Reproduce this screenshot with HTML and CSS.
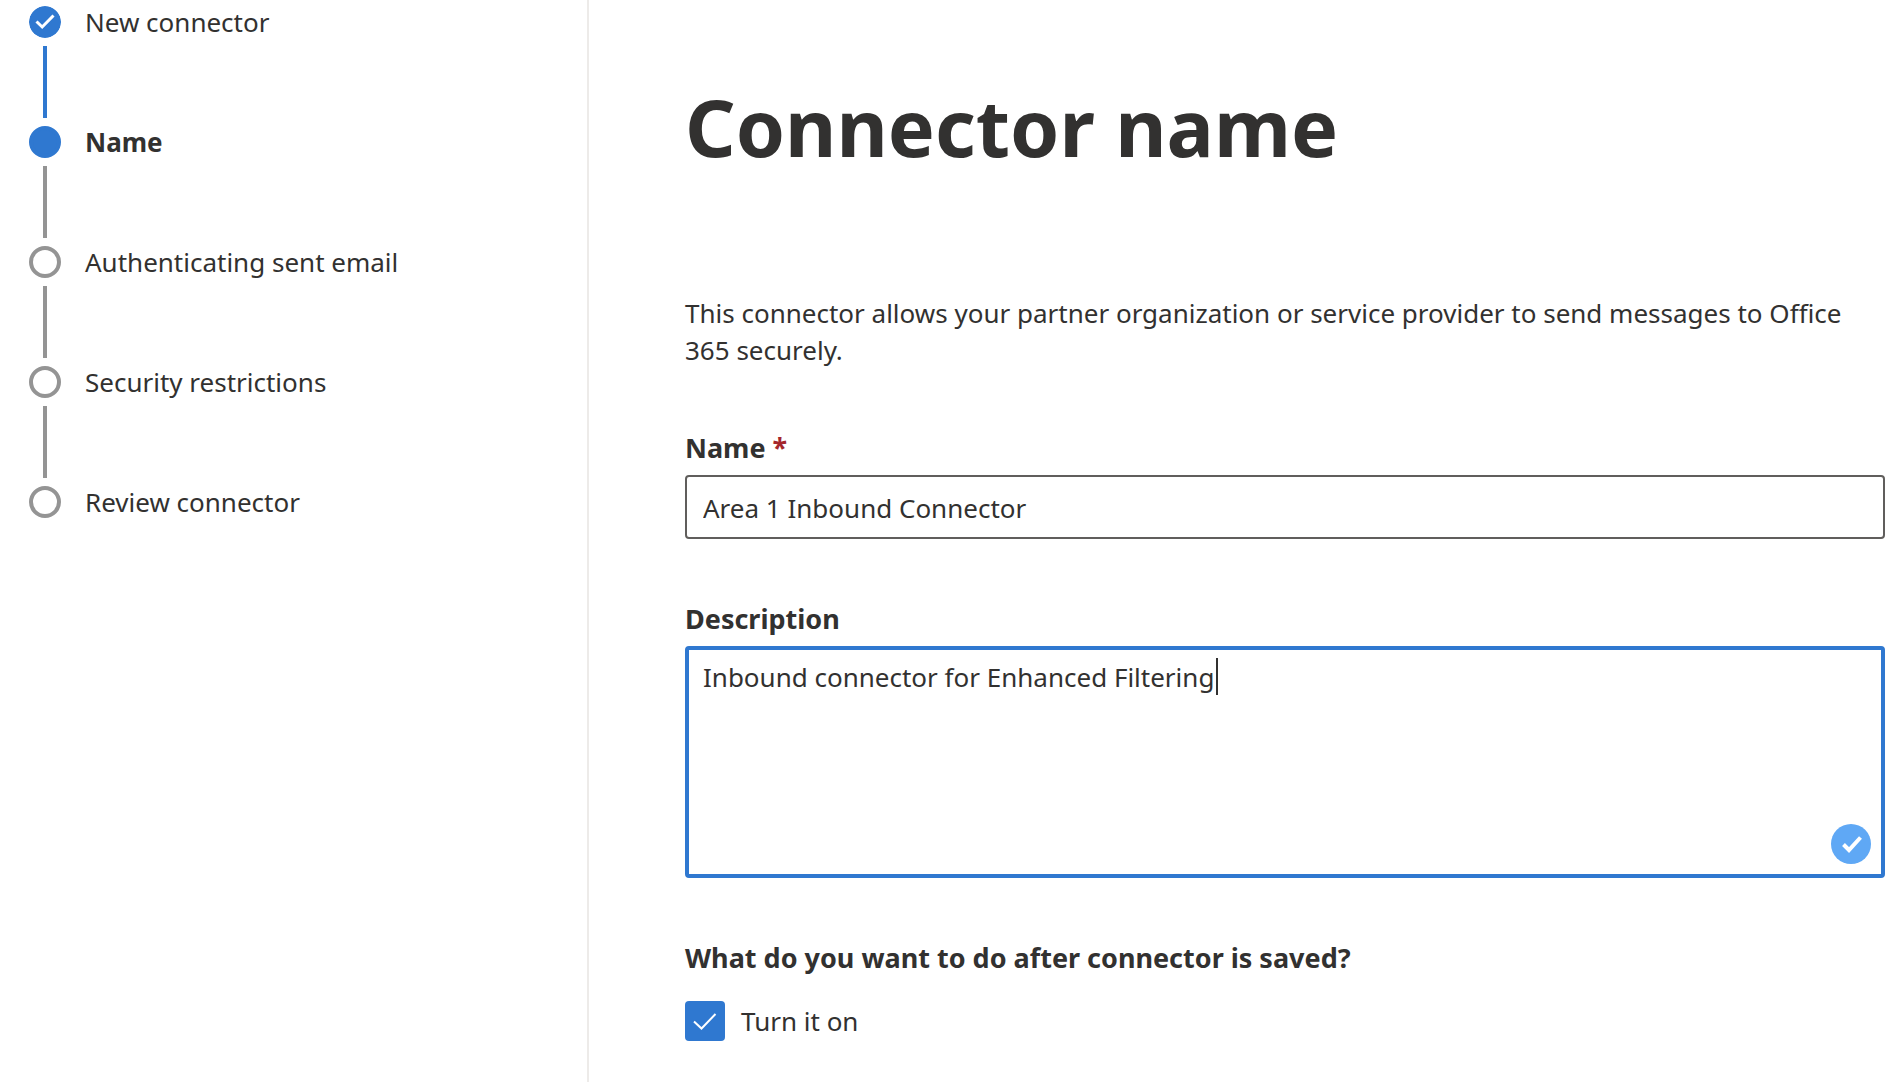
FILE: index.html
```html
<!DOCTYPE html>
<html lang="en">
<head>
<meta charset="utf-8">
<meta name="viewport" content="width=device-width, initial-scale=1">
<title>Connector name</title>
<link rel="stylesheet" href="styles.css">
</head>
<body>
<div class="wizard">
  <nav class="sidebar" aria-label="Steps">
    <ol class="steps">
      <li class="step step-done">
        <svg class="marker" viewBox="0 0 32 32" aria-hidden="true"><circle cx="16" cy="16" r="16"/><path d="M7.500 15.500l5.700 5.500L24.500 9.500" stroke-width="3"/></svg>
        <span class="step-label">New connector</span>
      </li>
      <li class="step step-current" aria-current="step">
        <span class="marker"></span>
        <span class="step-label">Name</span>
      </li>
      <li class="step">
        <span class="marker"></span>
        <span class="step-label">Authenticating sent email</span>
      </li>
      <li class="step">
        <span class="marker"></span>
        <span class="step-label">Security restrictions</span>
      </li>
      <li class="step">
        <span class="marker"></span>
        <span class="step-label">Review connector</span>
      </li>
    </ol>
  </nav>
  <main class="content">
    <h1 class="title">Connector name</h1>
    <p class="intro">This connector allows your partner organization or service provider to send messages to Office 365 securely.</p>
    <form class="form">
      <div class="field">
        <label class="label" for="name">Name <span class="required">*</span></label>
        <input class="input" id="name" type="text" value="Area 1 Inbound Connector" required>
      </div>
      <div class="field">
        <label class="label" for="description">Description</label>
        <div class="textarea-wrap">
          <textarea class="textarea" id="description" spellcheck="false">Inbound connector for Enhanced Filtering</textarea>
          <span class="caret"></span>
          <svg class="badge" viewBox="0 0 40 40" aria-hidden="true"><circle cx="20" cy="20" r="20"/><path d="M12.500 20.500l5.500 5.500L29.500 13.500" stroke-width="4"/></svg>
        </div>
      </div>
      <fieldset class="group">
        <legend class="label">What do you want to do after connector is saved?</legend>
        <label class="option">
          <span class="check">
            <input class="checkbox" type="checkbox" checked>
            <svg class="tick" viewBox="0 0 40 40" aria-hidden="true"><path d="M9 20.500l7.500 7L30.500 13"/></svg>
          </span>
          Turn it on
        </label>
      </fieldset>
    </form>
  </main>
</div>
</body>
</html>
```
FILE: styles.css
```css
* {
  box-sizing: border-box;
}

body {
  margin: 0;
  background: #fff;
  color: #323130;
  font: 26px/37px "Noto Sans", "Open Sans", sans-serif;
}

.wizard {
  display: flex;
  min-height: 100vh;
}

.sidebar {
  flex: 0 0 589px;
  padding: 6px 28px;
  border-right: 2px solid #edebe9;
}

.steps {
  display: flex;
  flex-direction: column;
  gap: 8px;
  margin: 0;
  padding: 0;
  list-style: none;
}

.step {
  display: grid;
  grid-template-columns: 34px 1fr;
  grid-template-rows: 32px 72px;
  gap: 8px 23px;
  align-items: center;
  justify-items: center;
}

.step-label {
  justify-self: start;
  line-height: 36px;
}

.step::after {
  content: "";
  width: 4px;
  height: 72px;
  background: #949494;
}

.step:last-child {
  grid-template-rows: 32px;
}

.step:last-child::after {
  content: none;
}

.marker {
  width: 32px;
  height: 32px;
  border: 4px solid #949494;
  border-radius: 50%;
}

.step-done .marker {
  border: 0;
  fill: #2f78d0;
}

.step-done::after {
  background: #2f78d0;
}

.step-current .marker {
  border-color: #2f78d0;
  background: #2f78d0;
}

.step-current .step-label {
  font-weight: 700;
}

.marker path,
.badge path {
  fill: none;
  stroke: #fff;
}

.content {
  flex: 1;
  min-width: 0;
  padding: 73px 18px 40px 96px;
}

.title {
  margin: 0 0 114px;
  font-size: 79px;
  line-height: 108px;
}

.intro {
  margin: 0 0 60px;
}

.form {
  display: flex;
  flex-direction: column;
  gap: 61px;
}

.field {
  display: flex;
  flex-direction: column;
  gap: 9px;
}

.label {
  padding: 0;
  font-size: 27px;
  font-weight: 700;
}

.required {
  color: #a4262c;
}

.input,
.textarea {
  display: block;
  width: 100%;
  margin: 0;
  border: 2px solid #605e5c;
  border-radius: 4px;
  background: #fff;
  color: inherit;
  font: inherit;
  outline: 0;
}

.input {
  height: 64px;
  padding: 2px 16px 0;
}

.textarea-wrap {
  position: relative;
}

.textarea {
  height: 232px;
  padding: 9px 14px;
  border: 4px solid #2f78d0;
  resize: none;
}

.caret {
  position: absolute;
  top: 12px;
  left: 531px;
  width: 2px;
  height: 37px;
  background: #323130;
}

.badge {
  position: absolute;
  right: 14px;
  bottom: 14px;
  width: 40px;
  height: 40px;
  fill: #5fa8f5;
}

.group {
  margin: 0;
  padding: 0;
  border: 0;
}

.option {
  display: flex;
  align-items: center;
  gap: 16px;
  margin-top: 25px;
}

.check {
  display: grid;
}

.checkbox,
.tick {
  grid-area: 1 / 1;
  width: 40px;
  height: 40px;
}

.checkbox {
  margin: 0;
  border-radius: 4px;
  background: #2f78d0;
  appearance: none;
}

.tick {
  fill: none;
  stroke: #fff;
  stroke-width: 2;
  pointer-events: none;
  visibility: hidden;
}

.checkbox:checked + .tick {
  visibility: visible;
}
```
